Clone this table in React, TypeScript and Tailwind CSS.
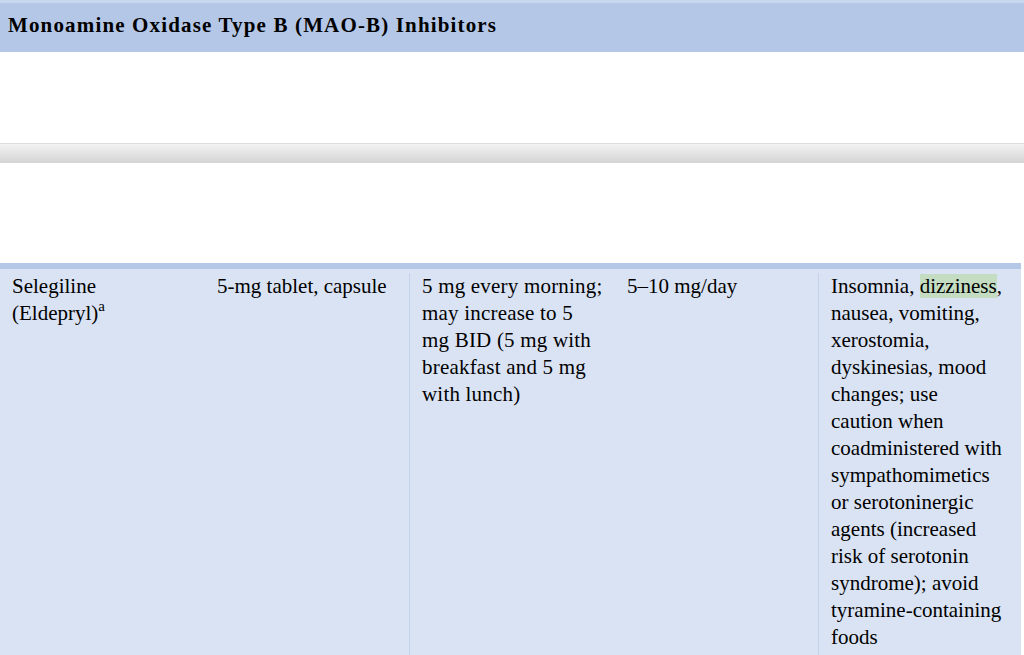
export default function App() {
  const serif = { fontFamily: '"Liberation Serif", "Times New Roman", serif' };

  return (
    <main className="w-[1024px] h-[655px] overflow-hidden bg-white text-black" style={serif}>
      <div className="h-[3px] bg-[#c9d7ee]" />
      <div className="h-[49px] bg-[#b4c7e7] flex items-center pl-[8px] pb-[4px]">
        <h1 className="text-[21px] font-bold tracking-[1.15px]">
          Monoamine Oxidase Type B (MAO-B) Inhibitors
        </h1>
      </div>

      <div className="h-[91px]" />

      <div className="h-[20px] bg-gradient-to-b from-[#f2f2f2] via-[#e3e3e3] to-[#d4d4d4] border-t border-[#dcdcdc]" />

      <div className="h-[100px]" />

      <div className="w-[1021px]">
        <div className="h-[6px] bg-[#b4c7e7]" />
        <div className="grid grid-cols-[205px_205px_205px_204px_202px] bg-[#dae3f3] h-[400px] text-[21px] leading-[27px] pt-[4px]">
          <div className="pl-[12px] pr-[8px]">
            Selegiline
            <br />
            (Eldepryl)<span className="text-[15px] relative -top-[9px]">a</span>
          </div>
          <div className="pl-[12px] pr-[8px] border-r border-[#c4d2ea]">5-mg tablet, capsule</div>
          <div className="pl-[12px] pr-[2px] whitespace-nowrap tracking-[0.2px]">
            5 mg every morning;
            <br />
            may increase to 5
            <br />
            mg BID (5 mg with
            <br />
            breakfast and 5 mg
            <br />
            with lunch)
          </div>
          <div className="pl-[12px] pr-[8px] border-r border-[#c4d2ea]">5–10 mg/day</div>
          <div className="pl-[12px] pr-[2px] whitespace-nowrap">
            Insomnia, <span className="bg-[#c3dcc2]">dizziness</span>,
            <br />
            nausea, vomiting,
            <br />
            xerostomia,
            <br />
            dyskinesias, mood
            <br />
            changes; use
            <br />
            caution when
            <br />
            coadministered with
            <br />
            sympathomimetics
            <br />
            or serotoninergic
            <br />
            agents (increased
            <br />
            risk of serotonin
            <br />
            syndrome); avoid
            <br />
            tyramine-containing
            <br />
            foods
          </div>
        </div>
      </div>
    </main>
  );
}
